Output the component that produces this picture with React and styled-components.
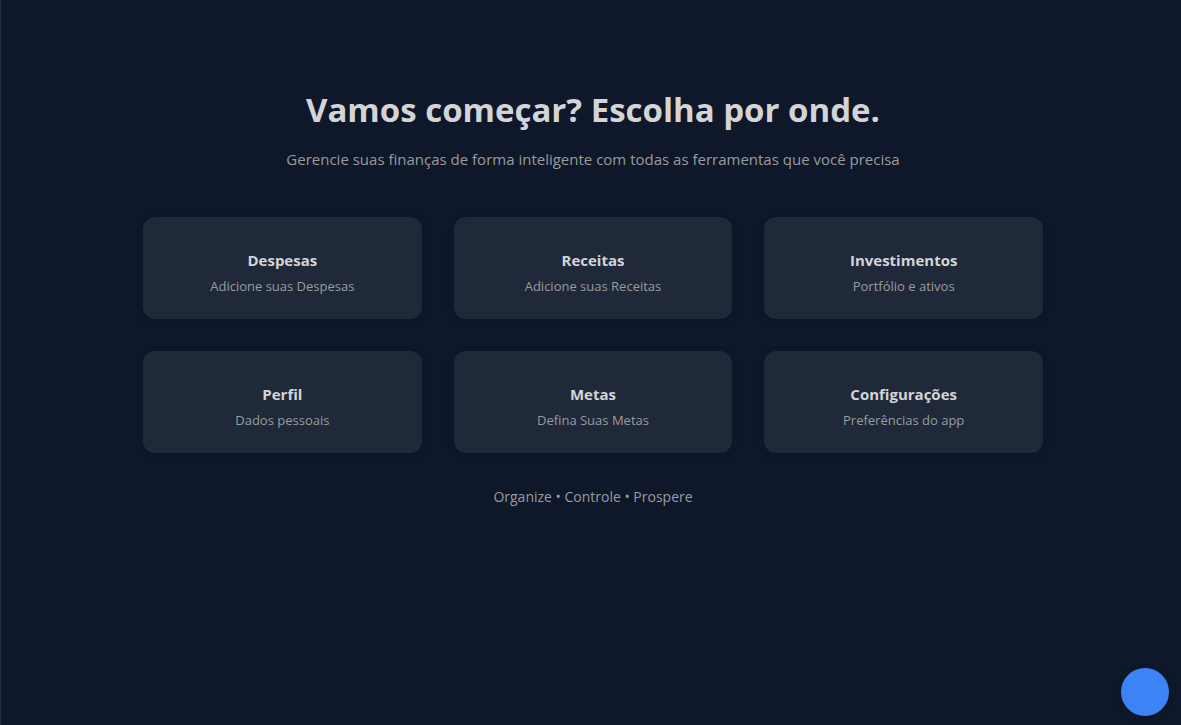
import React from "react";
import styled, { createGlobalStyle } from "styled-components";

const GlobalStyle = createGlobalStyle`
  *, *::before, *::after { box-sizing: border-box; }
  body {
    margin: 0;
    background: #0f172a;
    font-family: "Segoe UI", "Open Sans", "Noto Sans", sans-serif;
  }
`;

const Page = styled.main`
  min-height: 100vh;
  padding: 84px 32px 32px 36px;
  border-left: 1px solid #252c3b;
  text-align: center;
`;

const Content = styled.div`
  width: 100%;
  max-width: 900px;
  margin: 0 auto;
`;

const Title = styled.h1`
  margin: 0;
  color: #d4d4d6;
  font-size: 33px;
  font-weight: 700;
  line-height: 52px;
`;

const Subtitle = styled.p`
  margin: 11px 0 0;
  color: #9a9b9d;
  font-size: 15px;
  line-height: 24px;
`;

const CardGrid = styled.nav`
  display: grid;
  grid-template-columns: repeat(3, 1fr);
  gap: 32px;
  margin-top: 46px;
`;

const Card = styled.button`
  padding: 31px 16px 22px;
  border: 0;
  border-radius: 12px;
  background: #1f293a;
  box-shadow: 0 2px 8px rgba(0, 0, 0, 0.12);
  font-family: inherit;
  cursor: pointer;
`;

const CardTitle = styled.span`
  display: block;
  color: #d4d4d6;
  font-size: 15px;
  font-weight: 700;
  line-height: 24px;
`;

const CardText = styled.span`
  display: block;
  margin-top: 3px;
  color: #9a9b9d;
  font-size: 13px;
  line-height: 22px;
`;

const Tagline = styled.p`
  margin: 33px 0 0;
  color: #9a9b9d;
  font-size: 14px;
  line-height: 22px;
`;

const FloatingButton = styled.button`
  position: fixed;
  right: 12px;
  bottom: 9px;
  width: 48px;
  height: 48px;
  padding: 0;
  border: 0;
  border-radius: 50%;
  background: #3c83f6;
  box-shadow: 0 2px 8px rgba(0, 0, 0, 0.12);
  cursor: pointer;
`;

const sections = [
  { title: "Despesas", text: "Adicione suas Despesas" },
  { title: "Receitas", text: "Adicione suas Receitas" },
  { title: "Investimentos", text: "Portfólio e ativos" },
  { title: "Perfil", text: "Dados pessoais" },
  { title: "Metas", text: "Defina Suas Metas" },
  { title: "Configurações", text: "Preferências do app" },
];

export default function App() {
  return (
    <>
      <GlobalStyle />
      <Page>
        <Content>
          <Title>Vamos começar? Escolha por onde.</Title>
          <Subtitle>
            Gerencie suas finanças de forma inteligente com todas as ferramentas que você precisa
          </Subtitle>
          <CardGrid>
            {sections.map(({ title, text }) => (
              <Card key={title} type="button">
                <CardTitle>{title}</CardTitle>
                <CardText>{text}</CardText>
              </Card>
            ))}
          </CardGrid>
          <Tagline>Organize • Controle • Prospere</Tagline>
        </Content>
        <FloatingButton type="button" aria-label="Abrir menu" />
      </Page>
    </>
  );
}
